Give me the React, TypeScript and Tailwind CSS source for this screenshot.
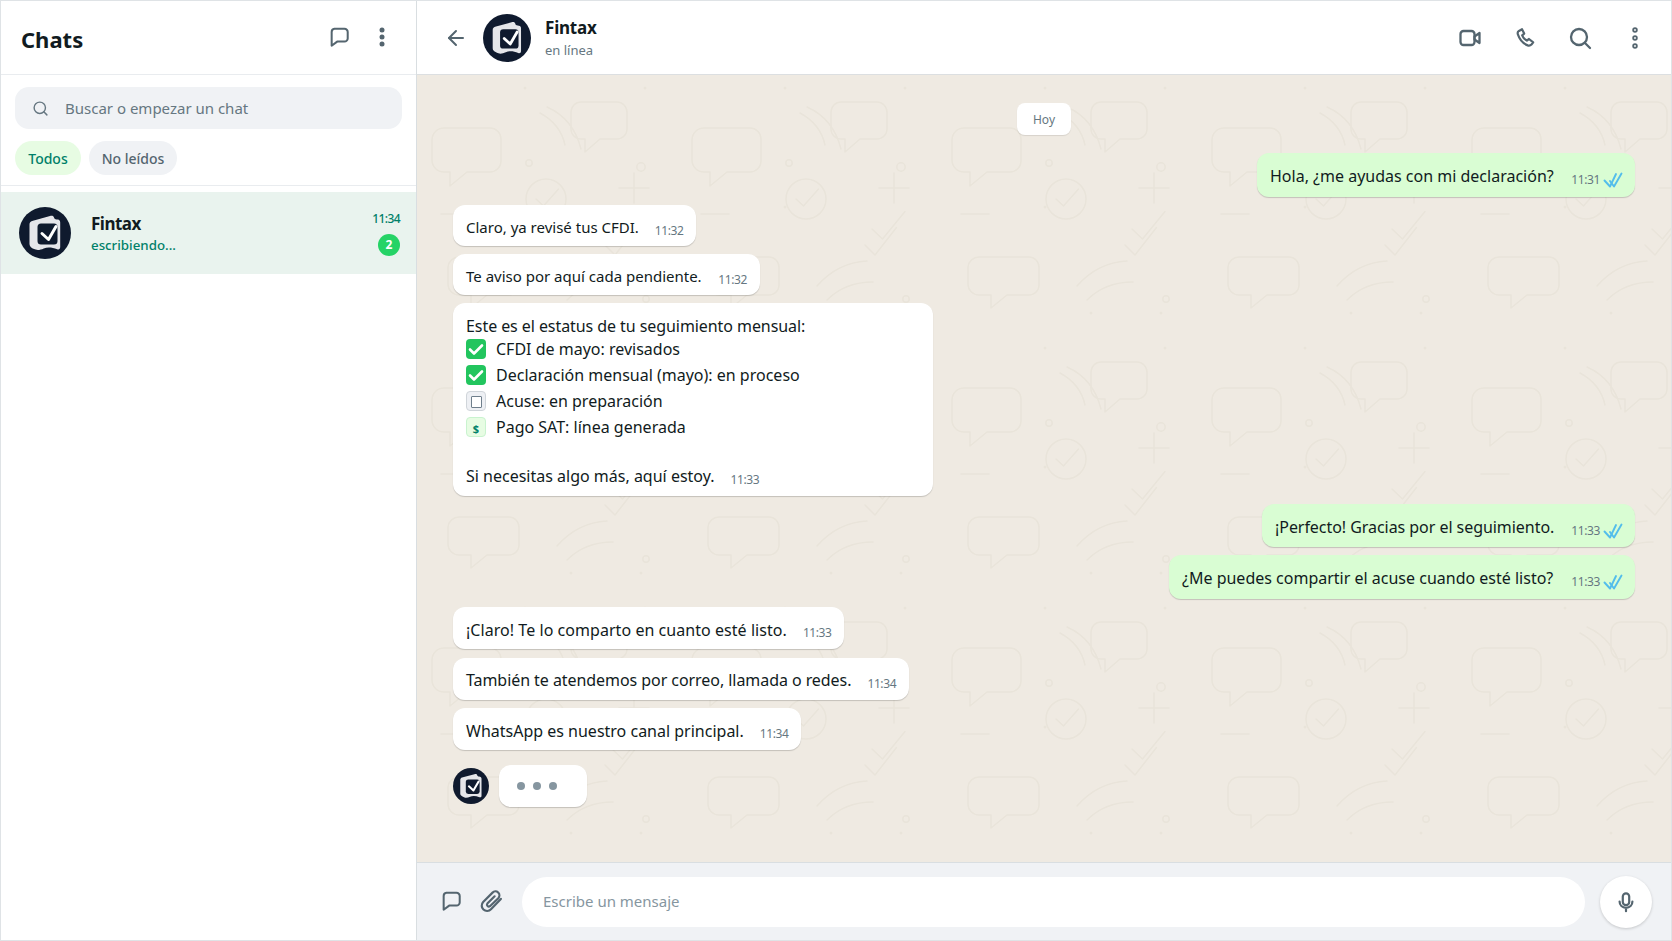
import React from "react";
import { ArrowLeft, Search } from "lucide-react";

const FONT = "font-['Noto_Sans','Open_Sans',sans-serif]";

function Logo({ size }: { size: number }) {
  return (
    <svg width={size} height={size} viewBox="0 0 52 52" className="shrink-0">
      <circle cx="26" cy="26" r="26" fill="#0f1a2e" />
      <path d="M10.500 17.500c0-2 1-3 2.600-3.600L31 9c2.200-.6 3.600 0 4 1.500.2 1 1 1.700 2.600 1.900l1.300.2c1.400.3 2.300 1.200 2.300 2.800v24.600c0 2-1.300 2.800-3 2.200-5-2-9.500-2.400-13.500-.8-3 1.300-5.500 2-8 1.200-2.300-.8-4-1.700-5-2.700-.8-.8-1.200-1.700-1.200-2.800z" fill="#e5e6ea" />
      <rect x="18.500" y="16.500" width="20" height="21" rx="3.500" fill="#0f1a2e" />
      <path d="M23 26.500l6.500 6 7.500-13" fill="none" stroke="#ffffff" strokeWidth="3" strokeLinecap="round" strokeLinejoin="round" />
    </svg>
  );
}

function Bubble() {
  return (
    <svg width="22" height="22" viewBox="0 0 24 24" fill="none" stroke="#54656f" strokeWidth="2.200" strokeLinejoin="round" strokeLinecap="round" className="shrink-0">
      <path d="M7 3h11a3.500 3.500 0 0 1 3.500 3.500v7a3.500 3.500 0 0 1-3.500 3.500h-8L4 21.500V6.500A3.500 3.500 0 0 1 7 3z" />
    </svg>
  );
}

function Dots({ open }: { open?: boolean }) {
  const ys = open ? [4, 12, 20] : [5, 12, 19];
  return (
    <svg width="24" height="24" viewBox="0 0 24 24" className="shrink-0">
      {ys.map((cy) => (
        <circle key={cy} cx="12" cy={cy} r={open ? 1.900 : 2.500} fill={open ? "#e8ebed" : "#54656f"} stroke="#54656f" strokeWidth={open ? 1.700 : 0} />
      ))}
    </svg>
  );
}

function Ticks() {
  return (
    <svg width="20" height="16" viewBox="0 0 20 16" fill="none" stroke="#53bdeb" strokeWidth="1.900" strokeLinecap="round" strokeLinejoin="round" className="shrink-0">
      <path d="M1.500 8.500l5.500 6L13 2" />
      <path d="M7 9l4 5.500L18.500 1.500" />
    </svg>
  );
}

function Time({ t }: { t: string }) {
  return <span className="text-[12px] leading-[16px] tracking-[-0.4px] whitespace-nowrap text-[#667781]">{t}</span>;
}

function In({ text, t, w, cls = "", h = "h-[42px]", pt = "pt-[11px]", tmt = "mt-[7px]", mt = "" }: { text: string; t: string; w: string; cls?: string; h?: string; pt?: string; tmt?: string; mt?: string }) {
  return (
    <div className={`${w} ${h} ${pt} ${mt} flex gap-[16px] self-start rounded-[12px] bg-white pl-[13px] pr-[13px] shadow-[0_1px_1px_rgba(0,0,0,0.18)]`}>
      <span className={`text-[16px] leading-[24px] text-[#111b21] whitespace-nowrap ${cls}`}>{text}</span>
      <span className={`ml-auto flex h-[16px] items-center ${tmt}`}><Time t={t} /></span>
    </div>
  );
}

function Out({ text, t, w, mt, h, cls = "" }: { text: string; t: string; w: string; mt: string; h: string; cls?: string }) {
  return (
    <div className={`${w} ${mt} ${h} flex gap-[16px] self-end rounded-[12px] bg-[#d9fdd3] pl-[13px] pr-[12px] pt-[11px] shadow-[0_1px_1px_rgba(0,0,0,0.18)]`}>
      <span className={`text-[16px] leading-[24px] text-[#111b21] whitespace-nowrap ${cls}`}>{text}</span>
      <span className="ml-auto mt-[8px] flex h-[16px] items-center gap-[3px]"><Time t={t} /><Ticks /></span>
    </div>
  );
}

function Wallpaper() {
  const s = "#e9e4da";
  return (
    <svg className="absolute inset-0 h-full w-full" xmlns="http://www.w3.org/2000/svg">
      <defs>
        <pattern id="wp" width="260" height="260" patternUnits="userSpaceOnUse">
          <g fill="none" stroke={s} strokeWidth="1.500" strokeLinecap="round" strokeLinejoin="round">
            <path d="M27 53h46a11 11 0 0 1 11 11v22a11 11 0 0 1-11 11H50l-17 14V97h-6a12 12 0 0 1-12-12V65a12 12 0 0 1 12-12z" />
            <path d="M164 27h36a10 10 0 0 1 10 10v17a10 10 0 0 1-10 10h-17l-15 13V64h-4a10 10 0 0 1-10-10V37a10 10 0 0 1 10-10z" />
            <path d="M130 32c18 8 29 22 34 42" />
            <path d="M123 38c13 7 22 18 25 32" />
            <circle cx="112" cy="88" r="3.200" />
            <circle cx="224" cy="92" r="4.200" />
            <circle cx="129" cy="124" r="20" />
            <path d="M119 124l7.500 7 15-17" />
            <path d="M202 113h30M217 98v30" />
            <path d="M195 154l10.500 10 22.500-27.500" />
            <path d="M188 170l10 10 21.500-27.500" />
            <path d="M24 139h28" />
            <path d="M42 182h50a10 10 0 0 1 10 10v18a10 10 0 0 1-10 10H70l-16 13v-13H42a11 11 0 0 1-11-11v-17a11 11 0 0 1 11-10z" />
            <path d="M140 211c14-16 30-24 50-25" />
            <path d="M150 225c12-12 26-18 46-18" />
            <circle cx="229" cy="224" r="3.200" />
          </g>
          <g fill={s}>
            <circle cx="108" cy="13" r="1.500" />
            <circle cx="228" cy="13" r="1.500" />
            <circle cx="224" cy="238" r="1.500" />
            <circle cx="154" cy="238" r="1.500" />
            <circle cx="108" cy="132" r="1.500" />
          </g>
        </pattern>
      </defs>
      <rect width="100%" height="100%" fill="url(#wp)" />
    </svg>
  );
}

function Row({ icon, text, mt }: { icon: React.ReactNode; text: string; mt?: string }) {
  return (
    <div className={`flex h-[20px] items-center gap-[10px] ${mt ?? ""}`}>
      {icon}
      <span className="text-[16px] leading-[24px] whitespace-nowrap text-[#111b21]">{text}</span>
    </div>
  );
}

const Checked = () => (
  <svg width="20" height="20" viewBox="0 0 20 20" className="shrink-0">
    <rect width="20" height="20" rx="4" fill="#22c55e" />
    <path d="M4 10.500l4 4 8-8" fill="none" stroke="#fff" strokeWidth="2.600" strokeLinecap="round" strokeLinejoin="round" />
  </svg>
);

function Slot({ children }: { children: React.ReactNode }) {
  return <span className="flex h-[24px] w-[24px] items-center justify-center">{children}</span>;
}

export default function App() {
  return (
    <div className={`${FONT} flex h-[941px] w-[1672px] overflow-hidden border border-[#dfe3e6] bg-white`}>
      <aside className="flex w-[416px] shrink-0 flex-col border-r border-[#d9dee1] bg-white">
        <header className="flex h-[74px] shrink-0 items-center border-b border-[#e9ecef] pl-[20px] pr-[22px] pt-[3px]">
          <h1 className="text-[22px] font-bold leading-none text-[#111b21]">Chats</h1>
          <div className="ml-auto flex items-center gap-[20px] pb-[4px]">
            <span className="flex"><Bubble /></span>
            <Dots />
          </div>
        </header>
        <div className="flex h-[111px] shrink-0 flex-col border-b border-[#e9ecef] px-[14px] pt-[12px]">
          <div className="flex h-[42px] items-center gap-[16px] rounded-[14px] bg-[#f0f2f5] pl-[17px]">
            <Search size={17} strokeWidth={2} color="#667781" />
            <span className="pt-[1px] text-[15px] text-[#667781]">Buscar o empezar un chat</span>
          </div>
          <div className="mt-[12px] flex gap-[8px]">
            <span className="flex h-[34px] w-[66px] items-center justify-center rounded-full bg-[#e7fce3] text-[14px] font-medium text-[#008069]">Todos</span>
            <span className="flex h-[34px] w-[88px] items-center justify-center rounded-full bg-[#f0f2f5] text-[14px] font-medium text-[#54656f]">No leídos</span>
          </div>
        </div>
        <div className="mt-[6px] flex h-[82px] items-center bg-[#e9f3ee] pl-[18px] pr-[16px]">
          <Logo size={52} />
          <div className="ml-[20px] flex flex-col">
            <span className="pt-[1px] text-[17px] font-bold leading-[24px] tracking-[-0.5px] text-[#111b21]">Fintax</span>
            <span className="text-[13.300px] font-medium leading-[19px] text-[#008069]">escribiendo...</span>
          </div>
          <div className="ml-auto flex flex-col items-end gap-[7px]">
            <span className="text-[12px] font-medium leading-[16px] tracking-[-0.6px] text-[#008069]">11:34</span>
            <span className="flex h-[22px] w-[22px] items-center justify-center rounded-full bg-[#25d366] text-[12px] font-bold text-white">2</span>
          </div>
        </div>
      </aside>
      <main className="flex min-w-0 flex-1 flex-col">
        <header className="flex h-[74px] shrink-0 items-center border-b border-[#dcdfe1] bg-white pl-[27px] pr-[24px]">
          <ArrowLeft size={24} strokeWidth={2} color="#54656f" />
          <span className="ml-[15px]"><Logo size={48} /></span>
          <div className="ml-[14px] flex flex-col">
            <span className="text-[17px] font-bold leading-[24px] tracking-[-0.2px] text-[#111b21]">Fintax</span>
            <span className="text-[13px] leading-[20px] text-[#667781]">en línea</span>
          </div>
          <div className="ml-auto flex items-center gap-[31px]">
            <Slot>
              <svg width="24" height="24" viewBox="0 0 24 24" fill="none" stroke="#54656f" strokeWidth="2.300" strokeLinejoin="round" strokeLinecap="round">
                <rect x="2.500" y="5" width="14" height="14" rx="3" />
                <path d="M16.500 10.500L21.500 7v10l-5-3.500z" />
              </svg>
            </Slot>
            <Slot>
              <svg width="21" height="21" viewBox="0 0 24 24" fill="none" stroke="#54656f" strokeWidth="2.500" strokeLinejoin="round" strokeLinecap="round">
                <path d="M8 2.500L4.500 4.500C3 5.500 2.800 7 3.300 8.500c2 6 6 10.500 11.200 12.500 1.700.6 3.200.2 4.300-1l2-2.500-4.800-3.800-2.500 1.800c-2.500-1.200-4.300-3.300-5.300-6l2.300-2z" />
              </svg>
            </Slot>
            <Slot>
              <svg width="24" height="24" viewBox="0 0 24 24" fill="none" stroke="#54656f" strokeWidth="2.300" strokeLinecap="round">
                <circle cx="11" cy="11" r="8" />
                <path d="M17 17l5 5" />
              </svg>
            </Slot>
            <Dots open />
          </div>
        </header>
        <section className="relative min-h-0 flex-1 bg-[#efeae2]">
          <Wallpaper />
          <div className="relative flex h-full flex-col pl-[36px] pr-[36px] pt-[28px]">
            <span className="flex h-[32px] w-[54px] items-center justify-center self-center rounded-[8px] bg-white pt-[1px] text-[12px] text-[#667781] shadow-[0_1px_1px_rgba(0,0,0,0.1)]">Hoy</span>
            <Out text="Hola, ¿me ayudas con mi declaración?" t="11:31" w="w-[378px]" mt="mt-[18px]" h="h-[44px]" />
            <div className="mt-[8px] flex flex-col gap-[8px]">
              <In text="Claro, ya revisé tus CFDI." t="11:32" w="w-[243px]" cls="text-[15px]!" h="h-[41px]" pt="pt-[10px]" tmt="mt-[8px]" />
              <In text="Te aviso por aquí cada pendiente." t="11:32" w="w-[307px]" cls="text-[15px]!" h="h-[41px]" pt="pt-[10px]" tmt="mt-[8px]" />
              <div className="h-[193px] w-[480px] rounded-[12px] bg-white pl-[13px] pr-[13px] pt-[11px] shadow-[0_1px_1px_rgba(0,0,0,0.18)]">
                <div className="text-[16px] leading-[24px] tracking-[-0.07px] text-[#111b21]">Este es el estatus de tu seguimiento mensual:</div>
                <div className="mt-[1px] flex flex-col">
                  <Row icon={<Checked />} text="CFDI de mayo: revisados" />
                  <Row icon={<Checked />} text="Declaración mensual (mayo): en proceso" mt="mt-[6px]" />
                  <Row mt="mt-[6px]" text="Acuse: en preparación" icon={
                    <span className="flex h-[20px] w-[20px] shrink-0 items-end justify-center rounded-[4px] border border-[#d0d5da] bg-[#eef0f4] pb-[2px]">
                      <span className="h-[12px] w-[11px] rounded-[1px] border border-[#6f7f8c] bg-white" />
                    </span>} />
                  <Row mt="mt-[6px]" text="Pago SAT: línea generada" icon={
                    <span className="flex h-[20px] w-[20px] shrink-0 items-end justify-center rounded-[4px] border border-[#c9f3cf] bg-[#e7fce3] text-[11px] font-bold leading-[14px] text-[#008069]">$</span>} />
                </div>
                <div className="mt-[27px] flex">
                  <span className="text-[16px] leading-[24px] text-[#111b21]">Si necesitas algo más, aquí estoy.</span>
                  <span className="ml-[16px] mt-[8px] flex h-[16px] items-center"><Time t="11:33" /></span>
                </div>
              </div>
            </div>
            <Out text="¡Perfecto! Gracias por el seguimiento." t="11:33" w="w-[373px]" mt="mt-[8px]" h="h-[43px]" cls="tracking-[-0.05px]" />
            <Out text="¿Me puedes compartir el acuse cuando esté listo?" t="11:33" w="w-[466px]" mt="mt-[8px]" h="h-[44px]" />
            <div className="mt-[8px] flex flex-col">
              <In text="¡Claro! Te lo comparto en cuanto esté listo." t="11:33" w="w-[391px]" cls="tracking-[0.05px]" />
              <In text="También te atendemos por correo, llamada o redes." t="11:34" w="w-[456px]" cls="tracking-[-0.06px]" mt="mt-[9px]" pt="pt-[10px]" tmt="mt-[8px]" />
              <In text="WhatsApp es nuestro canal principal." t="11:34" w="w-[348px]" mt="mt-[8px]" />
            </div>
            <div className="mt-[15px] flex items-center gap-[10px]">
              <Logo size={36} />
              <div className="flex h-[42px] w-[88px] items-center gap-[8px] rounded-[12px] bg-white pl-[18px] shadow-[0_1px_1px_rgba(0,0,0,0.18)]">
                <span className="h-[8px] w-[8px] rounded-full bg-[#8696a0]" />
                <span className="h-[8px] w-[8px] rounded-full bg-[#8696a0]" />
                <span className="h-[8px] w-[8px] rounded-full bg-[#8696a0]" />
              </div>
            </div>
          </div>
        </section>
        <footer className="flex h-[78px] shrink-0 items-center border-t border-[#d9dee1] bg-[#f0f2f5] pl-[23px] pr-[19px]">
          <span className="mb-[2px] flex"><Bubble /></span>
          <span className="ml-[17px] flex">
            <svg width="25" height="25" viewBox="0 0 24 24" fill="none" stroke="#54656f" strokeWidth="2.100" strokeLinecap="round" strokeLinejoin="round">
              <path d="M21 9.500l-9.500 10a5 5 0 0 1-7.500-7L13 3.500a3.800 3.800 0 0 1 5.500 5.300l-8 7.700a1.800 1.800 0 0 1-2.500-2.500L15 7" />
            </svg>
          </span>
          <div className="ml-[18px] flex h-[50px] flex-1 items-center rounded-full bg-white pl-[21px] text-[15px] text-[#8696a0]">Escribe un mensaje</div>
          <div className="ml-[15px] flex h-[52px] w-[52px] items-center justify-center rounded-full bg-white shadow-[0_1px_3px_rgba(0,0,0,0.18)]">
            <svg width="22" height="22" viewBox="0 0 24 24" fill="none" stroke="#54656f" strokeWidth="2.400" strokeLinecap="round">
              <rect x="8.500" y="2.500" width="7" height="13" rx="3.500" />
              <path d="M5 11.500c0 4 3 6.800 7 6.800s7-2.800 7-6.800M12 18.500V22" />
            </svg>
          </div>
        </footer>
      </main>
    </div>
  );
}
